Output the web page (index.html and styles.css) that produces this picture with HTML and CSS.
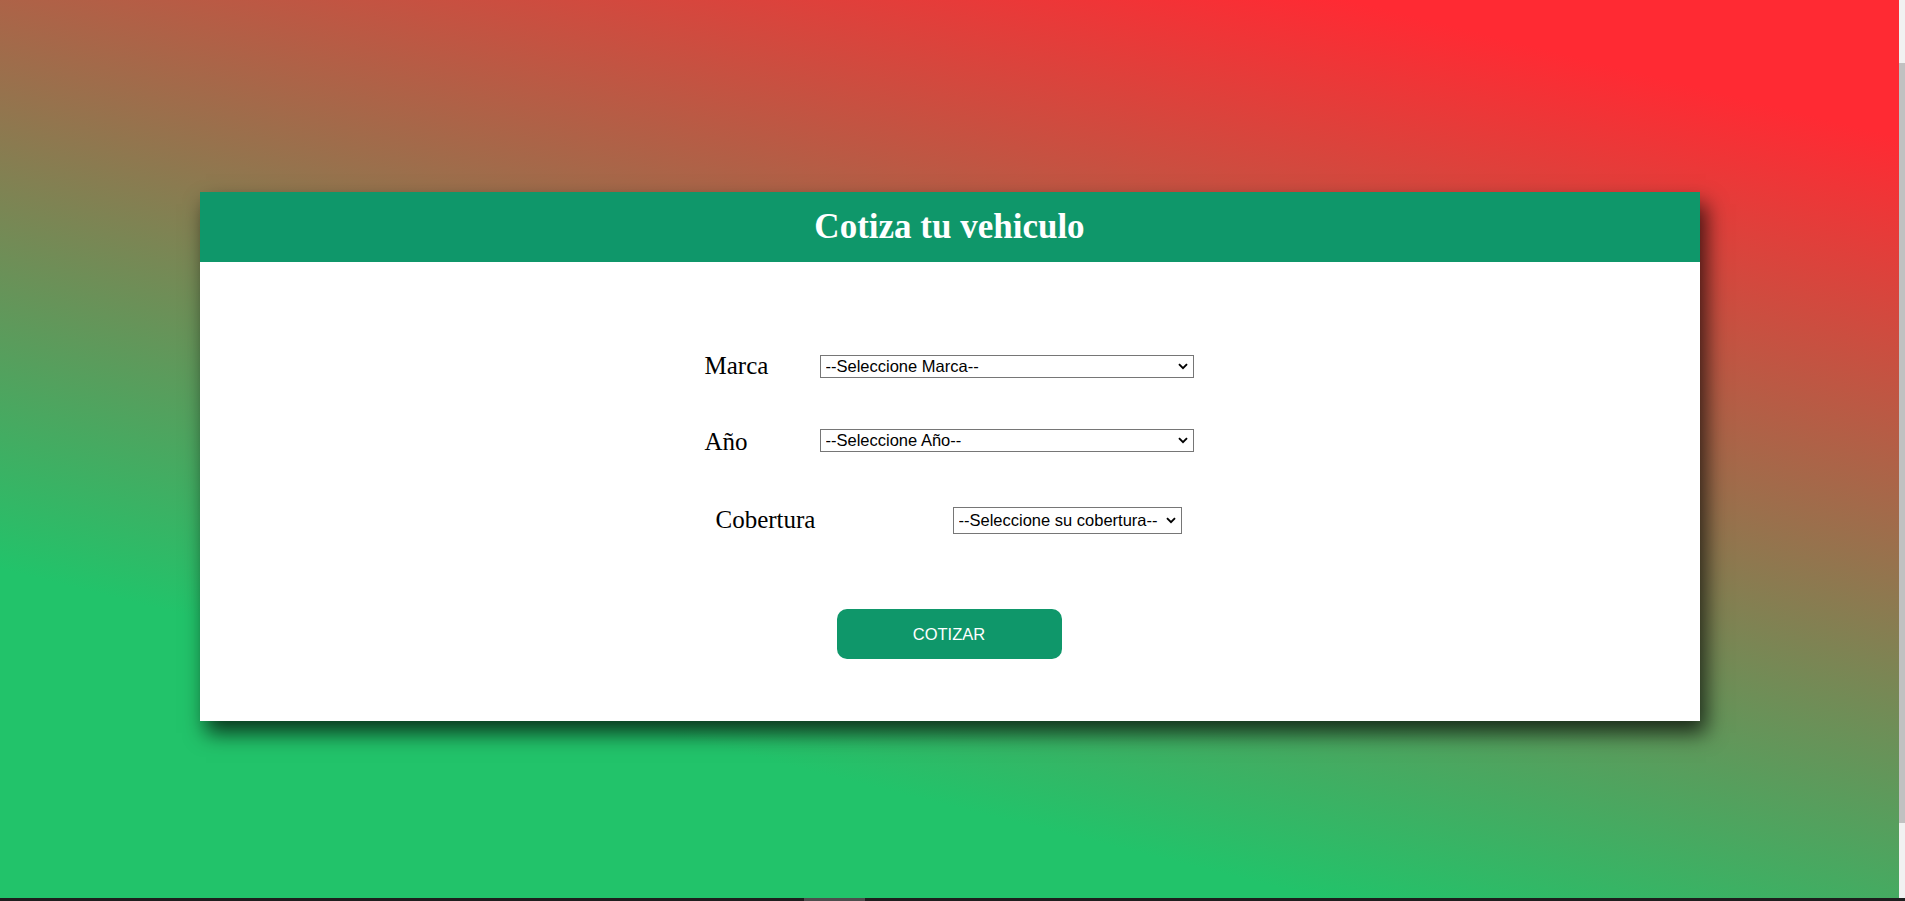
FILE: index.html
```html
<!DOCTYPE html>
<html lang="es">
<head>
<meta charset="utf-8">
<title>Cotiza tu vehiculo</title>
<link rel="stylesheet" href="styles.css">
</head>
<body>
<div class="screen">
  <main class="page">
    <section class="card">
      <header class="card-header">
        <h1 class="title">Cotiza tu vehiculo</h1>
      </header>
      <form class="form">
        <div class="row row-marca">
          <label class="label label-wide" for="marca">Marca</label>
          <span class="select-wrap">
            <select class="select select-long" id="marca">
              <option>--Seleccione Marca--</option>
            </select>
            <svg class="chev" width="10" height="7" viewBox="0 0 10 7" aria-hidden="true"><polyline points="1,1.2 5,5.2 9,1.2" fill="none" stroke="#000" stroke-width="1.9"/></svg>
          </span>
        </div>
        <div class="row row-anio">
          <label class="label label-wide label-low" for="anio">Año</label>
          <span class="select-wrap">
            <select class="select select-long" id="anio">
              <option>--Seleccione Año--</option>
            </select>
            <svg class="chev" width="10" height="7" viewBox="0 0 10 7" aria-hidden="true"><polyline points="1,1.2 5,5.2 9,1.2" fill="none" stroke="#000" stroke-width="1.9"/></svg>
          </span>
        </div>
        <div class="row row-cobertura">
          <label class="label label-cob" for="cobertura">Cobertura</label>
          <span class="select-wrap">
            <select class="select select-auto" id="cobertura">
              <option>--Seleccione su cobertura--</option>
            </select>
            <svg class="chev" width="10" height="7" viewBox="0 0 10 7" aria-hidden="true"><polyline points="1,1.2 5,5.2 9,1.2" fill="none" stroke="#000" stroke-width="1.9"/></svg>
          </span>
        </div>
        <button type="button" class="btn">COTIZAR</button>
      </form>
    </section>
  </main>
  <div class="vscroll"><div class="vthumb"></div></div>
  <div class="hscroll"><div class="hthumb"></div></div>
</div>
</body>
</html>
```
FILE: styles.css
```css
html, body {
  margin: 0;
  padding: 0;
}
body {
  width: 1905px;
  height: 901px;
  overflow: hidden;
  font-family: "Liberation Serif", "Times New Roman", serif;
}
.screen {
  display: grid;
  grid-template-columns: 1899px 6px;
  grid-template-rows: 898px 3px;
  width: 1905px;
  height: 901px;
}
.page {
  background: linear-gradient(194deg, #ff2a33 10%, #22c36a 76%);
  padding-top: 192px;
  box-sizing: border-box;
}
.card {
  width: 1500px;
  margin: 0 auto;
  background: #ffffff;
  box-shadow: 6px 12px 20px rgba(0, 0, 0, 0.72);
}
.card-header {
  background: #0f976a;
  height: 70px;
}
.title {
  margin: 0;
  text-align: center;
  color: #ffffff;
  font-family: "Liberation Serif", "Times New Roman", serif;
  font-weight: bold;
  font-size: 35px;
  line-height: 70px;
}
.form {
  padding: 90px 0 62px 505px;
  display: flex;
  flex-direction: column;
}
.row {
  display: flex;
  align-items: center;
  height: 28px;
}
.row-anio {
  margin-top: 46px;
}
.row-cobertura {
  margin-top: 52px;
  padding-left: 11px;
}
.label {
  font-family: "Liberation Serif", "Times New Roman", serif;
  font-size: 25px;
  line-height: 28px;
  color: #000000;
}
.label-low {
  padding-top: 3px;
}
.label-wide {
  width: 115px;
}
.label-cob {
  width: 237px;
}
.select-wrap {
  position: relative;
  display: inline-flex;
}
.select {
  -webkit-appearance: none;
  appearance: none;
  font-family: "Liberation Sans", Arial, sans-serif;
  font-size: 16.5px;
  line-height: 19px;
  color: #000000;
  background: #ffffff;
  border: 1px solid #767676;
  border-radius: 0;
  box-sizing: border-box;
  margin: 0;
  padding: 0 22px 0 5px;
}
.select-long {
  width: 374px;
  height: 23px;
}
.select-auto {
  width: 229px;
  height: 27px;
}
.chev {
  position: absolute;
  right: 6px;
  top: 50%;
  margin-top: -3px;
  pointer-events: none;
}
.btn {
  align-self: flex-start;
  margin: 75px 0 0 132px;
  width: 225px;
  height: 50px;
  background: #0f976a;
  color: #ffffff;
  border: none;
  border-radius: 10px;
  font-family: "Liberation Sans", Arial, sans-serif;
  font-size: 16.5px;
}
.vscroll {
  background: #f1f1f1;
  padding-top: 63px;
  box-sizing: border-box;
}
.vthumb {
  background: #c1c1c1;
  height: 760px;
}
.hscroll {
  grid-column: 1 / 3;
  background: #1e1e1e;
  padding-left: 804px;
}
.hthumb {
  width: 61px;
  height: 3px;
  background: #4d4d4d;
}
```
